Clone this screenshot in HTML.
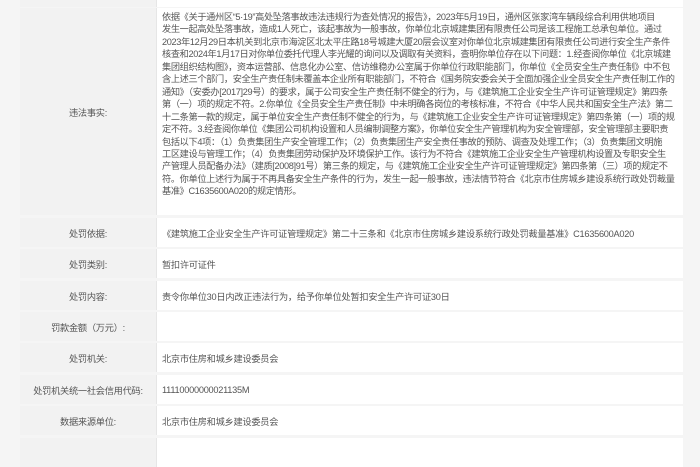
<!DOCTYPE html>
<html><head><meta charset="utf-8">
<style>
html,body{margin:0;padding:0;width:700px;height:445px;overflow:hidden;background:#f5f5f5;font-family:"Liberation Sans","Noto Sans CJK SC",sans-serif;color:#555;font-size:9.2px;letter-spacing:-0.25px;}
.row{position:absolute;left:20px;width:663px;background:#fff;overflow:hidden;}
.l{position:absolute;left:0;top:0;bottom:0;width:136px;background:#f2f2f2;border-right:1px solid #e6e6e6;display:flex;align-items:center;justify-content:center;white-space:nowrap;}
.v{position:absolute;left:137px;right:0;top:0;bottom:0;padding-left:5px;display:flex;align-items:center;white-space:nowrap;}
.big{display:block;line-height:12.45px;padding-top:3px;letter-spacing:-0.35px;}
</style></head><body>
<div class="row" style="top:-20px;height:27px"><div class="l"></div><div class="v"></div></div>
<div class="row" style="top:8px;height:207px"><div class="l">违法事实:</div><div class="v big">依据《关于通州区“5·19”高处坠落事故违法违规行为查处情况的报告》，2023年5月19日，通州区张家湾车辆段综合利用供地项目<br>发生一起高处坠落事故，造成1人死亡，该起事故为一般事故，你单位北京城建集团有限责任公司是该工程施工总承包单位。通过<br>2023年12月29日本机关到北京市海淀区北太平庄路18号城建大厦20层会议室对你单位北京城建集团有限责任公司进行安全生产条件<br>核查和2024年1月17日对你单位委托代理人李光耀的询问以及调取有关资料，查明你单位存在以下问题：1.经查阅你单位《北京城建<br>集团组织结构图》，资本运营部、信息化办公室、信访维稳办公室属于你单位行政职能部门，你单位《全员安全生产责任制》中不包<br>含上述三个部门，安全生产责任制未覆盖本企业所有职能部门，不符合《国务院安委会关于全面加强企业全员安全生产责任制工作的<br>通知》（安委办[2017]29号）的要求，属于公司安全生产责任制不健全的行为，与《建筑施工企业安全生产许可证管理规定》第四条<br>第（一）项的规定不符。2.你单位《全员安全生产责任制》中未明确各岗位的考核标准，不符合《中华人民共和国安全生产法》第二<br>十二条第一款的规定，属于单位安全生产责任制不健全的行为，与《建筑施工企业安全生产许可证管理规定》第四条第（一）项的规<br>定不符。3.经查阅你单位《集团公司机构设置和人员编制调整方案》，你单位安全生产管理机构为安全管理部，安全管理部主要职责<br>包括以下4项：（1）负责集团生产安全管理工作；（2）负责集团生产安全责任事故的预防、调查及处理工作；（3）负责集团文明施<br>工区建设与管理工作；（4）负责集团劳动保护及环境保护工作。该行为不符合《建筑施工企业安全生产管理机构设置及专职安全生<br>产管理人员配备办法》（建质[2008]91号）第三条的规定，与《建筑施工企业安全生产许可证管理规定》第四条第（三）项的规定不<br>符。你单位上述行为属于不再具备安全生产条件的行为，发生一起一般事故，违法情节符合《北京市住房城乡建设系统行政处罚裁量<br>基准》C1635600A020的规定情形。</div></div>
<div class="row" style="top:218px;height:29px"><div class="l">处罚依据:</div><div class="v">《建筑施工企业安全生产许可证管理规定》第二十三条和《北京市住房城乡建设系统行政处罚裁量基准》C1635600A020</div></div>
<div class="row" style="top:249px;height:29px"><div class="l">处罚类别:</div><div class="v">暂扣许可证件</div></div>
<div class="row" style="top:281px;height:29px"><div class="l">处罚内容:</div><div class="v">责令你单位30日内改正违法行为，给予你单位处暂扣安全生产许可证30日</div></div>
<div class="row" style="top:312px;height:29px"><div class="l">罚款金额（万元）:</div><div class="v"></div></div>
<div class="row" style="top:343px;height:29px"><div class="l">处罚机关:</div><div class="v">北京市住房和城乡建设委员会</div></div>
<div class="row" style="top:375px;height:29px"><div class="l">处罚机关统一社会信用代码:</div><div class="v">11110000000021135M</div></div>
<div class="row" style="top:406px;height:29px"><div class="l">数据来源单位:</div><div class="v">北京市住房和城乡建设委员会</div></div>
<div class="row" style="top:438px;height:29px"><div class="l"></div><div class="v"></div></div>
</body></html>
